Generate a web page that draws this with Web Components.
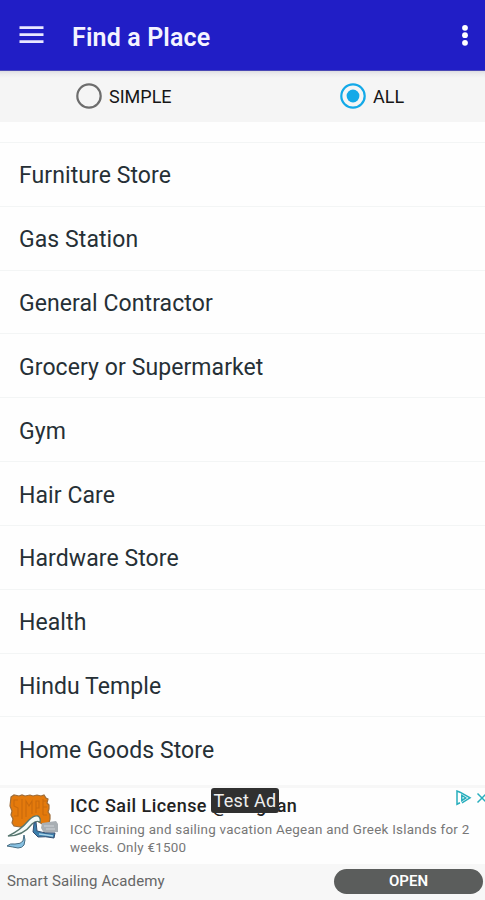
<!DOCTYPE html>
<html lang="en">
<head>
<meta charset="utf-8">
<title>Find a Place</title>
<style>
  body { margin: 0; font-family: Roboto, "Liberation Sans", sans-serif; background: #fff; }
</style>
</head>
<body>
<place-app></place-app>
<script>
const define = (name, html, setup) => {
  const template = document.createElement('template');
  template.innerHTML = html;
  customElements.define(name, class extends HTMLElement {
    constructor() {
      super();
      this.attachShadow({ mode: 'open' }).append(template.content.cloneNode(true));
    }
    connectedCallback() { if (setup) setup(this, this.shadowRoot); }
  });
};

define('app-bar', `
  <style>
    :host { display: flex; align-items: center; box-sizing: border-box; height: 71px; flex: none;
      padding: 0 15px 0 19px; background: #211ec6; border-bottom: 1px solid #4a48b4; color: #f4f3ff; }
    svg { display: block; flex: none; }
    h1 { margin: 5px 0 0 28px; flex: 1; font-size: 25px; line-height: 30px; font-weight: 600; letter-spacing: .15px; white-space: nowrap; }
  </style>
  <svg width="25" height="70" viewBox="0 0 25 70"><path d="M.5 27.6h24M.5 34.7h24M.5 41.6h24" stroke="#e9e8ff" stroke-width="2.8"/></svg>
  <h1><slot></slot></h1>
  <svg width="10" height="70" viewBox="0 0 10 70" fill="#fff"><circle cx="5" cy="27.8" r="2.9"/><circle cx="5" cy="35.2" r="2.9"/><circle cx="5" cy="42.8" r="2.9"/></svg>
`);

define('radio-option', `
  <style>
    :host { display: flex; align-items: center; gap: 7px; font-size: 18px; line-height: 22px; color: #161616; }
    svg { display: block; color: #6d6d6d; }
    .dot { display: none; }
    :host([checked]) svg { color: #13a9e8; }
    :host([checked]) .dot { display: block; }
    span { padding-top: 2px; }
  </style>
  <svg width="26" height="26" viewBox="0 0 26 26"><circle cx="13" cy="13" r="11.7" fill="none" stroke="currentColor" stroke-width="2.2"/><circle class="dot" cx="13" cy="13" r="6.4" fill="currentColor"/></svg>
  <span><slot></slot></span>
`);

define('filter-bar', `
  <style>
    :host { display: grid; grid-template-columns: 264px 1fr; align-items: center; height: 51px; flex: none;
      box-sizing: border-box; padding: 0 0 2px 76px;
      background: linear-gradient(#dedee2, #ececee 3px, #f5f5f5 7px); }
  </style>
  <slot></slot>
`);

define('place-row', `
  <style>
    :host { display: flex; align-items: center; box-sizing: border-box; height: 63.83px; flex: none;
      padding: 4px 20px 0 19px; border-top: 1px solid #f3f5f5; font-size: 23px; line-height: 28px;
      color: #263036; letter-spacing: .08px; white-space: nowrap; }
  </style>
  <slot></slot>
`);

define('place-list', `
  <style>
    :host { display: flex; flex-direction: column; height: 663px; flex: none; box-sizing: border-box;
      padding-top: 20px; overflow: hidden; background: #fefefe; }
  </style>
  <slot></slot>
`);

define('sail-logo', `
  <style>
    :host { display: block; width: 54px; height: 60px; }
    svg { display: block; }
  </style>
  <svg width="54" height="60" viewBox="0 0 54 60">
    <path d="M5 4l3-2 5 1 3-1 3 1 5-1 3 1 4-1 4 1 3-1 2 3 2 1-1 4 2 2v4l-1 3 2 3v4l-1 4-7 1-8-5-9 7-5 1-6-1-2-3 1-4-2-4 1-4-2-5z" fill="#e47a0c" stroke="#9d6c39" stroke-width="1.2"/>
    <path d="M12 7H8v6l4 2v8H8M16 6v20M20 24V8l3 5 3-5v13M30 20V8h3v7h-3M37 6v16M41 8h-4M37 14h4M37 22h4" fill="none" stroke="#c96a0d" stroke-width="1.1"/>
    <path d="M36 30l14-2 2 3v8l-14 1-3-5z" fill="#a9afb4"/>
    <path d="M38 33h10M40 36h9" stroke="#d0d4d8" stroke-width="1.1"/>
    <path d="M2 43C11 39 18 33 23 27q5-5 9-4 3 2 2 6-4-2-8 2-9 12-24 12z" fill="#f2f9f7" stroke="#56766f" stroke-width="1.3"/>
    <path d="M28 30l2-1 1 9q8 3 18 2l-1 5q-9-2-16-1l-5-5z" fill="#3a7eac" stroke="#344d70" stroke-width="1"/>
    <path d="M33 41q8 1 14 2" stroke="#a7d2e8" stroke-width="1.3" fill="none"/>
    <path d="M1 53q3-3 8-2 6 0 8-3l1-6q2 5 0 10-2 3-6 3-5-1-11-2z" fill="#86c0e1" stroke="#486d83" stroke-width="1"/>
  </svg>
`);

define('ad-banner', `
  <style>
    :host { display: block; position: relative; height: 115px; flex: none; box-sizing: border-box;
      border-top: 3px solid #f7f7f7; background: #fefefe; overflow: hidden; }
    .main { display: flex; height: 76px; }
    sail-logo { margin: 5px 0 0 6px; flex: none; }
    .copy { margin-left: 10px; padding-top: 7px; white-space: nowrap; }
    h2 { margin: 0; font-size: 18px; line-height: 22px; font-weight: 500; color: #222; letter-spacing: .46px; }
    p { margin: 4px 0 0; font-size: 13.4px; line-height: 17.5px; color: #777; letter-spacing: .26px; }
    .foot { display: flex; align-items: center; justify-content: space-between; height: 36px;
      box-sizing: border-box; padding: 0 2px 2px 7px; background: #f7f7f7; }
    .brand { font-size: 15px; color: #666; letter-spacing: .12px; }
    button { all: unset; box-sizing: border-box; width: 149px; height: 25px; border-radius: 13px;
      background: #5b5d5c; color: #fff; text-align: center; font-size: 15px; line-height: 25px; font-weight: 600; letter-spacing: 0; }
    .test { position: absolute; left: 211px; top: 0; width: 68px; height: 25px; border-radius: 3px;
      background: #303030; color: #eee; font-size: 18px; line-height: 26px; text-align: center; white-space: nowrap; letter-spacing: .3px; }
    .choices { position: absolute; right: 0; top: 2px; }
  </style>
  <div class="main">
    <sail-logo></sail-logo>
    <div class="copy">
      <h2>ICC Sail License @ Aegean</h2>
      <p>ICC Training and sailing vacation Aegean and Greek Islands for 2<br>weeks. Only €1500</p>
    </div>
  </div>
  <div class="foot"><span class="brand">Smart Sailing Academy</span><button>OPEN</button></div>
  <div class="test">Test Ad</div>
  <svg class="choices" width="30" height="16" viewBox="0 0 30 16" fill="none" stroke="#28aebd" stroke-width="1.5"><path d="M5 2.2L2 1v13.2l3-1.4M5 2.2L15 7.8 7 12.8M6.8 5.3v5.2l4-2.6z"/><path d="M22.5 3.5l9 9M22.5 12.5l9-9"/></svg>
`);

define('place-app', `
  <style>:host { display: flex; flex-direction: column; height: 900px; overflow: hidden; }</style>
  <app-bar>Find a Place</app-bar>
  <filter-bar><radio-option>SIMPLE</radio-option><radio-option checked>ALL</radio-option></filter-bar>
  <place-list></place-list>
  <ad-banner></ad-banner>
`, (host, root) => {
  const names = ['Furniture Store', 'Gas Station', 'General Contractor', 'Grocery or Supermarket', 'Gym',
    'Hair Care', 'Hardware Store', 'Health', 'Hindu Temple', 'Home Goods Store'];
  root.querySelector('place-list').append(...names.map(name => {
    const row = document.createElement('place-row');
    row.textContent = name;
    return row;
  }));
});
</script>
</body>
</html>
